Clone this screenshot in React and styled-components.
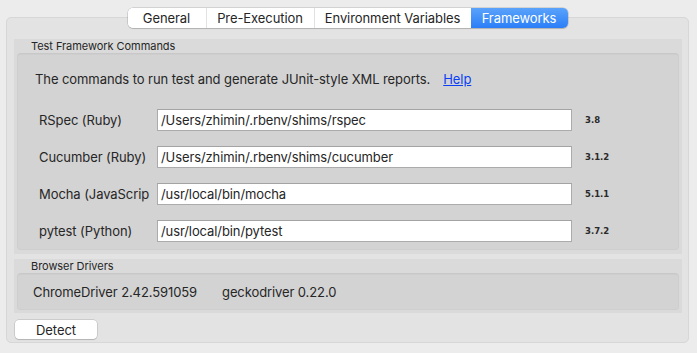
import React from "react";
import styled, { createGlobalStyle } from "styled-components";

const Global = createGlobalStyle`
  html, body { margin: 0; padding: 0; background: #ececec; }
  body { font-family: Inter, "Noto Sans", sans-serif; color: #262626; }
`;

const Page = styled.div`
  width: 697px;
  height: 353px;
  box-sizing: border-box;
  padding: 8px 8px 0 6px;
  background: #ececec;
`;

const TabBar = styled.div`
  position: relative;
  z-index: 1;
  display: flex;
  justify-content: center;
  margin-bottom: -11px;
`;

const Tabs = styled.div`
  display: flex;
  height: 20px;
  border-radius: 5px;
  background: #fff;
  box-shadow: 0 0 0 0.5px rgba(0, 0, 0, 0.22), 0 1px 1px rgba(0, 0, 0, 0.12);
  overflow: hidden;
`;

const Tab = styled.div`
  width: ${(p) => p.$w}px;
  display: flex;
  align-items: center;
  justify-content: center;
  font-size: 13px;
  letter-spacing: -0.08px;
  color: ${(p) => (p.$active ? "#fff" : "#262626")};
  background: ${(p) =>
    p.$active ? "linear-gradient(#5aa3fb, #2a7ef7)" : "#fff"};
  border-left: ${(p) => (p.$first || p.$active ? "none" : "1px solid #e2e2e2")};
  box-sizing: border-box;
`;

const Panel = styled.div`
  height: 326px;
  box-sizing: border-box;
  border: 1px solid #d7d7d7;
  border-radius: 5px;
  background: #e3e3e3;
  padding: 21px 6px 0 7px;
  display: flex;
  flex-direction: column;
`;

const Section = styled.div`
  background: #dadada;
  padding: 0 3px ${(p) => p.$bottom}px 3px;
  & + & {
    margin-top: 5px;
  }
`;

const SectionTitle = styled.div`
  height: 14px;
  line-height: 15px;
  font-size: 11px;
  padding-left: 14px;
  color: #262626;
  letter-spacing: -0.05px;
`;

const Box = styled.div`
  background: #d3d3d3;
  border-radius: 4px;
  border-top: 1px solid #c8c8c8;
  box-shadow: inset 0 0 0 0.5px rgba(0, 0, 0, 0.05);
`;

const CommandsBox = styled(Box)`
  height: 197px;
  box-sizing: border-box;
  padding: 15px 0 0 18px;
`;

const Description = styled.div`
  font-size: 13px;
  letter-spacing: -0.08px;
  height: 20px;
  display: flex;
  align-items: center;
  gap: 13px;
  margin-bottom: 20px;
`;

const HelpLink = styled.a`
  color: #0a3ff5;
  text-decoration: underline;
  cursor: pointer;
`;

const Rows = styled.div`
  display: flex;
  flex-direction: column;
  gap: 15px;
`;

const Row = styled.div`
  display: flex;
  align-items: center;
  height: 22px;
`;

const Label = styled.div`
  width: 108px;
  padding-left: 4px;
  margin-right: 10px;
  font-size: 13px;
  letter-spacing: -0.08px;
  white-space: nowrap;
`;

const PathInput = styled.div`
  width: 415px;
  height: 22px;
  box-sizing: border-box;
  background: #fff;
  border: 1px solid #ababab;
  border-top-color: #a3a3a3;
  font-size: 13px;
  letter-spacing: -0.1px;
  padding: 0 3px;
  display: flex;
  align-items: center;
  white-space: nowrap;
`;

const Version = styled.div`
  margin-left: 13px;
  font-family: "DejaVu Sans", Verdana, sans-serif;
  font-weight: bold;
  font-size: 8.5px;
  color: #2a2a2a;
`;

const DriversBox = styled(Box)`
  height: 37px;
  box-sizing: border-box;
  display: flex;
  align-items: center;
  padding-left: 16px;
  gap: 25px;
  font-size: 13px;
  letter-spacing: -0.1px;
`;

const Detect = styled.button`
  margin-top: 7px;
  margin-left: 1px;
  width: 82px;
  height: 19px;
  border: none;
  border-radius: 4px;
  background: #fff;
  box-shadow: 0 0 0 0.5px rgba(0, 0, 0, 0.2), 0 1px 1px rgba(0, 0, 0, 0.12);
  font-family: Inter, "Noto Sans", sans-serif;
  font-size: 13px;
  letter-spacing: -0.08px;
  color: #262626;
  padding: 0;
`;

const frameworks = [
  { label: "RSpec (Ruby)", path: "/Users/zhimin/.rbenv/shims/rspec", version: "3.8" },
  { label: "Cucumber (Ruby)", path: "/Users/zhimin/.rbenv/shims/cucumber", version: "3.1.2" },
  { label: "Mocha (JavaScrip", path: "/usr/local/bin/mocha", version: "5.1.1" },
  { label: "pytest (Python)", path: "/usr/local/bin/pytest", version: "3.7.2" },
];

export default function App() {
  return (
    <Page>
      <Global />
      <TabBar>
        <Tabs>
          <Tab $w={78} $first>General</Tab>
          <Tab $w={108}>Pre-Execution</Tab>
          <Tab $w={157}>Environment Variables</Tab>
          <Tab $w={97} $active>Frameworks</Tab>
        </Tabs>
      </TabBar>
      <Panel>
        <Section $bottom={4}>
          <SectionTitle>Test Framework Commands</SectionTitle>
          <CommandsBox>
            <Description>
              <span>The commands to run test and generate JUnit-style XML reports.</span>
              <HelpLink>Help</HelpLink>
            </Description>
            <Rows>
              {frameworks.map((f) => (
                <Row key={f.label}>
                  <Label>{f.label}</Label>
                  <PathInput>{f.path}</PathInput>
                  <Version>{f.version}</Version>
                </Row>
              ))}
            </Rows>
          </CommandsBox>
        </Section>
        <Section $bottom={3}>
          <SectionTitle>Browser Drivers</SectionTitle>
          <DriversBox>
            <span>ChromeDriver 2.42.591059</span>
            <span>geckodriver 0.22.0</span>
          </DriversBox>
        </Section>
        <div>
          <Detect>Detect</Detect>
        </div>
      </Panel>
    </Page>
  );
}
